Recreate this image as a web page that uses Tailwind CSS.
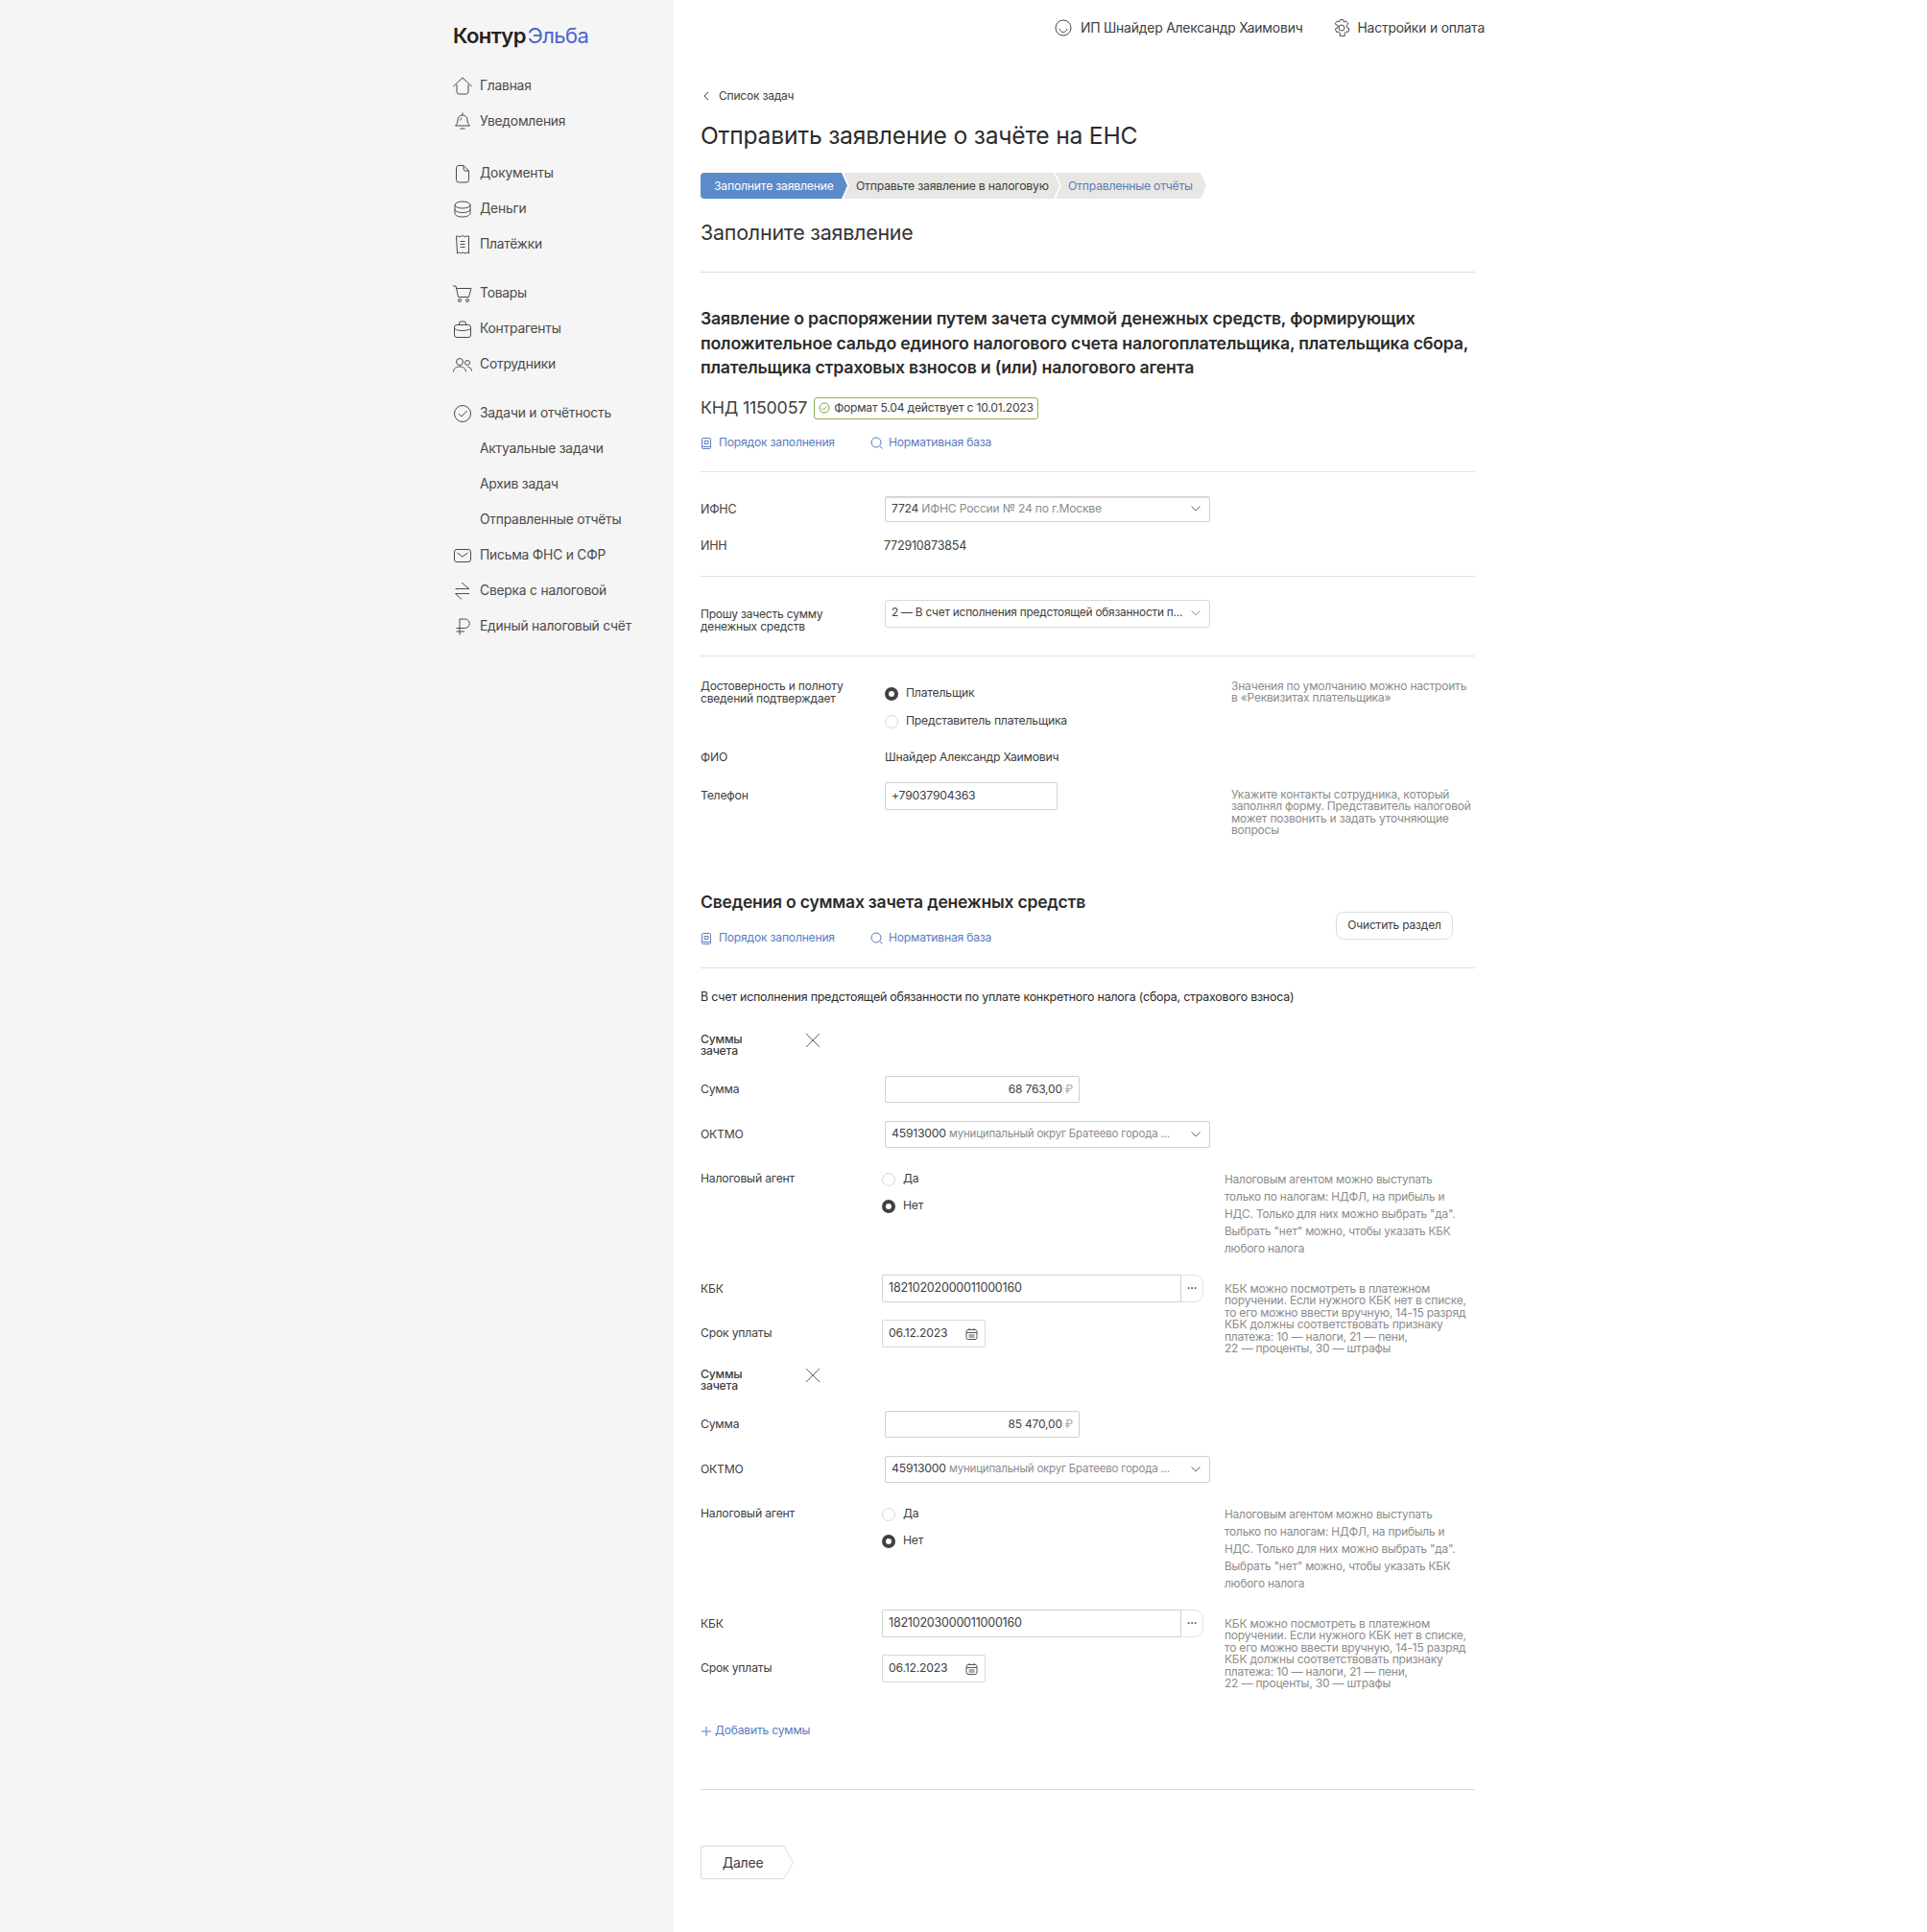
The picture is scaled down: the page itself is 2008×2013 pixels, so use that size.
<!DOCTYPE html>
<html lang="ru">
<head>
    <meta charset="UTF-8">
    <meta name="viewport" content="width=device-width, initial-scale=1.0">
    <title>Контур Эльба</title>
    <script src="https://cdn.jsdelivr.net/npm/@tailwindcss/browser@4"></script>
</head>
<body class="bg-white font-[Inter,sans-serif] text-[#404040] text-[12.2px] tracking-[-0.2px]">
    <div class="flex min-h-[2013px]">
        <!-- sidebar -->
        <aside class="w-[702px] shrink-0 bg-[#f5f5f5] pl-[472px] pt-[22px] text-[13.8px] text-[#4a4a4a]">
            <div class="flex h-[30px] items-center text-[22px] leading-none tracking-[-0.6px]">
                <span class="font-semibold text-[#222]">Контур</span><span class="ml-[2px] text-[#4a63cf]">Эльба</span>
            </div>
            <nav class="mt-[19px] flex flex-col">
                <a class="flex h-[37px] items-center gap-[8px]"><svg class="h-[20px] w-[20px] shrink-0" viewBox="0 0 20 20" fill="none" stroke="#4a4a4a"><path d="M.3 10 10 1l9.700 9"/><path d="M4 8v7.500A2.500 2.500 0 0 0 6.500 18h7a2.500 2.500 0 0 0 2.500-2.500V8"/></svg>Главная</a>
                <a class="flex h-[37px] items-center gap-[8px]"><svg class="h-[20px] w-[20px] shrink-0" viewBox="0 0 20 20" fill="none" stroke="#4a4a4a"><path d="M10 .5V3M10 3c-3 0-5 2.200-5 5 0 3-1 4.500-2.500 6h15c-1.500-1.500-2.500-3-2.500-6 0-2.800-2-5-5-5Z"/><path d="M7.500 17h5M9 5.500 7.500 8.500"/></svg>Уведомления</a>
                <a class="mt-[17px] flex h-[37px] items-center gap-[8px]"><svg class="h-[20px] w-[20px] shrink-0" viewBox="0 0 20 20" fill="none" stroke="#4a4a4a"><path d="M3.500 4A2.500 2.500 0 0 1 6 1.500h5l5.500 5.500v9.500A2.500 2.500 0 0 1 14 19H6a2.500 2.500 0 0 1-2.500-2.500Z"/><path d="M11 1.500V5a2 2 0 0 0 2 2h3.500"/></svg>Документы</a>
                <a class="flex h-[37px] items-center gap-[8px]"><svg class="h-[20px] w-[20px] shrink-0" viewBox="0 0 20 20" fill="none" stroke="#4a4a4a"><ellipse cx="10" cy="5.500" rx="8" ry="3.500"/><path d="M2 5.500V10c0 2 3.600 3.500 8 3.500s8-1.500 8-3.500V5.500"/><path d="M2 10v4.500c0 2 3.600 3.500 8 3.500s8-1.500 8-3.500V10"/></svg>Деньги</a>
                <a class="flex h-[37px] items-center gap-[8px]"><svg class="h-[20px] w-[20px] shrink-0" viewBox="0 0 20 20" fill="none" stroke="#4a4a4a"><path d="M3.500 1h2l1.500 1 1.500-1h3l1.500 1 1.500-1h2v18l-2-1-2 1-2-1-2 1-2-1-2 1Z"/><path d="M7.500 6.500h5M7.500 9.500h5M7.500 12.500h5"/></svg>Платёжки</a>
                <a class="mt-[14px] flex h-[37px] items-center gap-[8px]"><svg class="h-[20px] w-[20px] shrink-0" viewBox="0 0 20 20" fill="none" stroke="#4a4a4a"><path d="M0 2h3l2.500 11.500h11L19 4.500H4"/><circle cx="7" cy="17" r="1.500"/><circle cx="15" cy="17" r="1.500"/></svg>Товары</a>
                <a class="flex h-[37px] items-center gap-[8px]"><svg class="h-[20px] w-[20px] shrink-0" viewBox="0 0 20 20" fill="none" stroke="#4a4a4a"><rect x="1.500" y="5.500" width="17" height="13" rx="2.500"/><path d="M6.500 5.500V4a2 2 0 0 1 2-2h3a2 2 0 0 1 2 2v1.500M1.500 9.500c2.500 1.500 5 2 8.500 2s6-.5 8.500-2"/></svg>Контрагенты</a>
                <a class="flex h-[37px] items-center gap-[8px]"><svg class="h-[20px] w-[20px] shrink-0" viewBox="0 0 20 20" fill="none" stroke="#4a4a4a"><circle cx="7" cy="7" r="3.500"/><path d="M.5 17.500c0-3.500 2.800-5.500 6.500-5.500s6.500 2 6.500 5.500"/><circle cx="15" cy="8" r="2.500"/><path d="M15.500 12.500c2.500 0 4 1.700 4 4"/></svg>Сотрудники</a>
                <a class="mt-[14px] flex h-[37px] items-center gap-[8px]"><svg class="h-[20px] w-[20px] shrink-0" viewBox="0 0 20 20" fill="none" stroke="#4a4a4a"><circle cx="10" cy="10" r="8.500"/><path d="m6 10 3 3 5.500-6"/></svg>Задачи и отчётность</a>
                <a class="flex h-[37px] items-center pl-[28px]">Актуальные задачи</a>
                <a class="flex h-[37px] items-center pl-[28px]">Архив задач</a>
                <a class="flex h-[37px] items-center pl-[28px]">Отправленные отчёты</a>
                <a class="flex h-[37px] items-center gap-[8px]"><svg class="h-[20px] w-[20px] shrink-0" viewBox="0 0 20 20" fill="none" stroke="#4a4a4a"><rect x="1.500" y="3.500" width="17" height="13" rx="2.500"/><path d="m4.500 7 5.500 4 5.500-4"/></svg>Письма ФНС и СФР</a>
                <a class="flex h-[37px] items-center gap-[8px]"><svg class="h-[20px] w-[20px] shrink-0" viewBox="0 0 20 20" fill="none" stroke="#4a4a4a"><path d="M2.500 7.500H17L9 1M17 12.500H2.500L9 18.500"/></svg>Сверка с налоговой</a>
                <a class="flex h-[37px] items-center gap-[8px]"><svg class="h-[20px] w-[20px] shrink-0" viewBox="0 0 20 20" fill="none" stroke="#4a4a4a"><path d="M7 18.500V2h5.500a4.500 4.500 0 0 1 0 9.500H3.500M3.500 15H12"/></svg>Единый налоговый счёт</a>
            </nav>
        </aside>

        <!-- main -->
        <main class="w-[845px] pl-[28px]">
            <header class="flex h-[58px] items-center justify-end text-[13.9px]">
                <svg class="h-[18px] w-[18px]" viewBox="0 0 18 18" fill="none" stroke="#4a4a4a"><circle cx="9" cy="9" r="8"/><path d="M5 10c.5 2.200 2 3.500 4 3.500s3.500-1.300 4-3.500"/></svg>
                <span class="ml-[9px]">ИП Шнайдер Александр Хаимович</span>
                <svg class="ml-[31px] h-[20px] w-[20px]" viewBox="0 0 20 20" fill="none" stroke="#4a4a4a"><path d="M8.300 1.500h3.400l.6 2.400 2.300-1 2.300 3-1.700 1.800.6 2.300 2.200 1-1 3.300-2.500-.2-1.500 1.900.4 2.400H8.100l.4-2.400L7 14.100l-2.500.2-1-3.300 2.200-1 .6-2.300L3.100 5.900l2.300-3 2.300 1Z" stroke-linejoin="round"/><circle cx="10" cy="10" r="3"/></svg>
                <span class="ml-[6px]">Настройки и оплата</span>
            </header>

            <div class="w-[807px]">
                <a class="mt-[32px] flex h-[20px] items-center text-[12px]"><svg class="mr-[10px] ml-[3px] h-[10px] w-[6px]" viewBox="0 0 6 10" fill="none" stroke="#333"><path d="M5 1 1 5l4 4"/></svg>Список задач</a>
                <h1 class="mt-[13px] flex h-[36px] items-center text-[24.6px] text-[#2b2b2b]">Отправить заявление о зачёте на ЕНС</h1>

                <div class="mt-[21px] flex h-[27px] pt-0">
                    <div class="flex w-[153px] items-center whitespace-nowrap rounded-l-[4px] bg-[#5b8bc9] pl-[14px] pt-[1px] text-white [clip-path:polygon(0_0,calc(100%-6px)_0,100%_50%,calc(100%-6px)_100%,0_100%)]">Заполните заявление</div>
                    <div class="-ml-[4px] flex w-[225px] items-center whitespace-nowrap bg-[#e8e7e3] pl-[13px] pt-[1px] [clip-path:polygon(0_0,calc(100%-6px)_0,100%_50%,calc(100%-6px)_100%,0_100%,6px_50%)]">Отправьте заявление в налоговую</div>
                    <div class="-ml-[4px] flex w-[157px] items-center whitespace-nowrap bg-[#e8e7e3] pl-[13px] pt-[1px] text-[#5a7cc0] [clip-path:polygon(0_0,calc(100%-6px)_0,100%_50%,calc(100%-6px)_100%,0_100%,6px_50%)]">Отправленные отчёты</div>
                </div>

                <h2 class="mt-[20px] flex h-[30px] items-center text-[21.4px] text-[#333]">Заполните заявление</h2>
                <hr class="mt-[26px] border-[#dcdcdc]">

                <h3 class="mt-[35px] whitespace-nowrap text-[17.7px] font-semibold leading-[25.5px] text-[#2b2b2b]">Заявление о распоряжении путем зачета суммой денежных средств, формирующих<br>положительное сальдо единого налогового счета налогоплательщика, плательщика сбора,<br>плательщика страховых взносов и (или) налогового агента</h3>

                <div class="mt-[18px] flex h-[23px] items-center">
                    <span class="text-[17.8px] text-[#404040]">КНД 1150057</span>
                    <span class="ml-[7px] flex h-[23px] w-[234px] items-center gap-[4px] whitespace-nowrap rounded-[3px] border border-[#8db24c] pl-[4px] text-[12.1px]"><svg class="h-[12px] w-[12px] shrink-0" viewBox="0 0 12 12" fill="none" stroke="#7fa83f"><circle cx="6" cy="6" r="5"/><path d="m3.500 6 2 2 3-3.500"/></svg>Формат 5.04 действует с 10.01.2023</span>
                </div>

                <div class="mt-[15px] flex h-[20px] items-center text-[12.1px] text-[#5a7cc0]">
                    <svg class="ml-[1px] h-[12px] w-[10px]" viewBox="0 0 10 12" fill="none" stroke="#5a7cc0"><rect x=".5" y=".5" width="9" height="11" rx="1"/><path d="M3 3.500h4v3H3ZM.5 9.500h9"/></svg>
                    <span class="ml-[8px] w-[158px]">Порядок заполнения</span>
                    <svg class="h-[13px] w-[13px]" viewBox="0 0 13 13" fill="none" stroke="#5a7cc0"><circle cx="6" cy="6" r="5"/><path d="m9.500 9.500 3 3"/></svg>
                    <span class="ml-[6px]">Нормативная база</span>
                </div>
                <hr class="mt-[19px] border-[#e2e2e2]">

                <div class="mt-[25px] flex h-[27px] items-center">
                    <span class="w-[192px] shrink-0 pt-[2px] text-[12.5px]">ИФНС</span>
                    <div class="flex h-[27px] w-[339px] items-center justify-between rounded-[2px] border border-[#d0d0d0] pl-[6px] pr-[9px] shadow-[inset_0_1px_0_#ddd] text-[12.1px]"><span class="whitespace-nowrap">7724 <span class="text-[#8c8c8c]">ИФНС России № 24 по г.Москве</span></span><svg class="h-[6px] w-[10px]" viewBox="0 0 10 6" fill="none" stroke="#666"><path d="m.5.500 4.500 4.500L9.500.500"/></svg></div>
                </div>
                <div class="mt-[16px] flex h-[20px] items-center text-[12.5px]">
                    <span class="w-[191px] shrink-0">ИНН</span>
                    <span>772910873854</span>
                </div>
                <hr class="mt-[20px] border-[#e2e2e2]">

                <div class="mt-[24px] flex h-[29px] items-start">
                    <span class="w-[192px] shrink-0 pt-[8px] text-[12px] leading-[13px]">Прошу зачесть сумму<br>денежных средств</span>
                    <div class="flex h-[29px] w-[339px] items-center justify-between rounded-[3px] border border-[#d8d8d8] pl-[6px] pr-[9px] text-[11.8px]"><span class="whitespace-nowrap">2 — В счет исполнения предстоящей обязанности п...</span><svg class="h-[6px] w-[10px] shrink-0" viewBox="0 0 10 6" fill="none" stroke="#999"><path d="m.5.500 4.500 4.500L9.500.500"/></svg></div>
                </div>
                <hr class="mt-[29px] border-[#e2e2e2]">

                <div class="mt-[25px] flex h-[52px] items-start">
                    <span class="-mt-[1px] w-[192px] shrink-0 text-[12px] leading-[13px]">Достоверность и полноту<br>сведений подтверждает</span>
                    <div class="w-[361px] shrink-0 pt-[4px]">
                        <label class="flex h-[20px] items-center gap-[8px]"><span class="h-[14px] w-[14px] rounded-full border-[4px] border-[#404040] bg-white"></span>Плательщик</label>
                        <label class="mt-[9px] flex h-[20px] items-center gap-[8px]"><span class="h-[14px] w-[14px] rounded-full border border-[#d8d8d8]"></span>Представитель плательщика</label>
                    </div>
                    <p class="whitespace-nowrap text-[12px] leading-[12.5px] text-[#8c8c8c]">Значения по умолчанию можно настроить<br>в «Реквизитах плательщика»</p>
                </div>
                <div class="mt-[19px] flex h-[20px] items-center">
                    <span class="w-[192px] shrink-0">ФИО</span>
                    <span>Шнайдер Александр Хаимович</span>
                </div>
                <div class="mt-[15px] flex h-[58px] items-start">
                    <span class="flex h-[29px] w-[192px] shrink-0 items-center">Телефон</span>
                    <div class="w-[361px] shrink-0"><div class="flex h-[29px] w-[180px] items-center rounded-[2px] border border-[#d0d0d0] pl-[6px]">+79037904363</div></div>
                    <p class="whitespace-nowrap pt-[7px] text-[12px] leading-[12.5px] text-[#8c8c8c]">Укажите контакты сотрудника, который<br>заполнял форму. Представитель налоговой<br>может позвонить и задать уточняющие<br>вопросы</p>
                </div>

                <div class="mt-[58px] flex justify-between">
                    <div>
                        <h3 class="flex h-[20px] items-center text-[17.5px] font-semibold text-[#2b2b2b]">Сведения о суммах зачета денежных средств</h3>
                        <div class="mt-[17px] flex h-[20px] items-center text-[12.1px] text-[#5a7cc0]">
                            <svg class="ml-[1px] h-[12px] w-[10px]" viewBox="0 0 10 12" fill="none" stroke="#5a7cc0"><rect x=".5" y=".5" width="9" height="11" rx="1"/><path d="M3 3.500h4v3H3ZM.5 9.500h9"/></svg>
                            <span class="ml-[8px] w-[158px]">Порядок заполнения</span>
                            <svg class="h-[13px] w-[13px]" viewBox="0 0 13 13" fill="none" stroke="#5a7cc0"><circle cx="6" cy="6" r="5"/><path d="m9.500 9.500 3 3"/></svg>
                            <span class="ml-[6px]">Нормативная база</span>
                        </div>
                    </div>
                    <button class="mr-[23px] mt-[19px] h-[29px] w-[122px] rounded-[8px] border border-[#dcdcdc] text-[12px]">Очистить раздел</button>
                </div>
                <hr class="mt-[20px] border-[#e2e2e2]">
                <p class="mt-[21px] flex h-[20px] items-center text-[12.4px] text-[#2b2b2b]">В счет исполнения предстоящей обязанности по уплате конкретного налога (сбора, страхового взноса)</p>

                <!-- первая сумма -->
                <section class="mt-[26px]">
                    <div class="flex h-[27px] items-start">
                        <span class="w-[109px] shrink-0 pt-[1px] font-medium leading-[12.5px]">Суммы<br>зачета</span>
                        <svg class="h-[16px] w-[16px]" viewBox="0 0 16 16" fill="none" stroke="#666"><path d="m1 1 14 14M15 1 1 15"/></svg>
                    </div>
                    <div class="mt-[18px] flex h-[28px] items-center">
                        <span class="w-[192px] shrink-0 pt-[2px]">Сумма</span>
                        <div class="flex h-[28px] w-[203px] items-center justify-end rounded-[2px] border border-[#d0d0d0] pr-[6px] text-[12px]">68 763,00 <span class="ml-[3px] text-[#aaa]">₽</span></div>
                    </div>
                    <div class="mt-[19px] flex h-[28px] items-center">
                        <span class="w-[192px] shrink-0 pt-[2px]">ОКТМО</span>
                        <div class="flex h-[28px] w-[339px] items-center justify-between rounded-[2px] border border-[#d0d0d0] pl-[6px] pr-[9px]"><span class="whitespace-nowrap">45913000 <span class="text-[11.5px] text-[#8c8c8c]">муниципальный округ Братеево города ...</span></span><svg class="h-[6px] w-[10px]" viewBox="0 0 10 6" fill="none" stroke="#666"><path d="m.5.500 4.500 4.500L9.500.500"/></svg></div>
                    </div>
                    <div class="mt-[22px] flex h-[92px] items-start">
                        <span class="flex h-[20px] w-[189px] shrink-0 items-center pt-[2px]">Налоговый агент</span>
                        <div class="w-[357px] shrink-0">
                            <label class="mt-[1px] flex h-[20px] items-center gap-[8px]"><span class="h-[14px] w-[14px] rounded-full border border-[#d8d8d8]"></span>Да</label>
                            <label class="mt-[8px] flex h-[20px] items-center gap-[8px]"><span class="h-[14px] w-[14px] rounded-full border-[4px] border-[#404040] bg-white"></span>Нет</label>
                        </div>
                        <p class="whitespace-nowrap pt-[2px] text-[11.85px] leading-[18px] text-[#8c8c8c]">Налоговым агентом можно выступать<br>только по налогам: НДФЛ, на прибыль и<br>НДС. Только для них можно выбрать "да".<br>Выбрать "нет" можно, чтобы указать КБК<br>любого налога</p>
                    </div>
                    <div class="mt-[18px] flex">
                        <div class="w-[546px] shrink-0">
                            <div class="flex h-[29px] items-center">
                                <span class="w-[189px] shrink-0 pt-[2px]">КБК</span>
                                <div class="flex h-[29px] w-[312px] items-center rounded-l-[2px] border border-[#d0d0d0] pl-[6px] text-[12.5px]">18210202000011000160</div>
                                <div class="flex h-[29px] w-[23px] items-center justify-center rounded-r-[9px] border border-l-0 border-[#e2e2e2] text-[11px] font-bold leading-none">···</div>
                            </div>
                            <div class="mt-[18px] flex h-[29px] items-center">
                                <span class="w-[189px] shrink-0">Срок уплаты</span>
                                <div class="flex h-[29px] w-[108px] items-center justify-between rounded-[2px] border border-[#d8d8d8] pl-[6px] pr-[7px]">06.12.2023<svg class="h-[13px] w-[13px]" viewBox="0 0 13 13" fill="none" stroke="#555"><rect x="1" y="2.500" width="11" height="10" rx="2"/><path d="M1 5.500h11M4 1v2M9 1v2M3.500 8h6M3.500 10h6"/></svg></div>
                            </div>
                        </div>
                        <p class="h-[85px] whitespace-nowrap pt-[9px] text-[12px] leading-[12.6px] text-[#8c8c8c]">КБК можно посмотреть в платежном<br>поручении. Если нужного КБК нет в списке,<br>то его можно ввести вручную, 14-15 разряд<br>КБК должны соответствовать признаку<br>платежа: 10 — налоги, 21 — пени,<br>22 — проценты, 30 — штрафы</p>
                    </div>
                </section>

                <!-- вторая сумма -->
                <section class="mt-[12px]">
                    <div class="flex h-[27px] items-start">
                        <span class="w-[109px] shrink-0 pt-[1px] font-medium leading-[12.5px]">Суммы<br>зачета</span>
                        <svg class="h-[16px] w-[16px]" viewBox="0 0 16 16" fill="none" stroke="#666"><path d="m1 1 14 14M15 1 1 15"/></svg>
                    </div>
                    <div class="mt-[18px] flex h-[28px] items-center">
                        <span class="w-[192px] shrink-0 pt-[2px]">Сумма</span>
                        <div class="flex h-[28px] w-[203px] items-center justify-end rounded-[2px] border border-[#d0d0d0] pr-[6px] text-[12px]">85 470,00 <span class="ml-[3px] text-[#aaa]">₽</span></div>
                    </div>
                    <div class="mt-[19px] flex h-[28px] items-center">
                        <span class="w-[192px] shrink-0 pt-[2px]">ОКТМО</span>
                        <div class="flex h-[28px] w-[339px] items-center justify-between rounded-[2px] border border-[#d0d0d0] pl-[6px] pr-[9px]"><span class="whitespace-nowrap">45913000 <span class="text-[11.5px] text-[#8c8c8c]">муниципальный округ Братеево города ...</span></span><svg class="h-[6px] w-[10px]" viewBox="0 0 10 6" fill="none" stroke="#666"><path d="m.5.500 4.500 4.500L9.500.500"/></svg></div>
                    </div>
                    <div class="mt-[22px] flex h-[92px] items-start">
                        <span class="flex h-[20px] w-[189px] shrink-0 items-center pt-[2px]">Налоговый агент</span>
                        <div class="w-[357px] shrink-0">
                            <label class="mt-[1px] flex h-[20px] items-center gap-[8px]"><span class="h-[14px] w-[14px] rounded-full border border-[#d8d8d8]"></span>Да</label>
                            <label class="mt-[8px] flex h-[20px] items-center gap-[8px]"><span class="h-[14px] w-[14px] rounded-full border-[4px] border-[#404040] bg-white"></span>Нет</label>
                        </div>
                        <p class="whitespace-nowrap pt-[2px] text-[11.85px] leading-[18px] text-[#8c8c8c]">Налоговым агентом можно выступать<br>только по налогам: НДФЛ, на прибыль и<br>НДС. Только для них можно выбрать "да".<br>Выбрать "нет" можно, чтобы указать КБК<br>любого налога</p>
                    </div>
                    <div class="mt-[18px] flex">
                        <div class="w-[546px] shrink-0">
                            <div class="flex h-[29px] items-center">
                                <span class="w-[189px] shrink-0 pt-[2px]">КБК</span>
                                <div class="flex h-[29px] w-[312px] items-center rounded-l-[2px] border border-[#d0d0d0] pl-[6px] text-[12.5px]">18210203000011000160</div>
                                <div class="flex h-[29px] w-[23px] items-center justify-center rounded-r-[9px] border border-l-0 border-[#e2e2e2] text-[11px] font-bold leading-none">···</div>
                            </div>
                            <div class="mt-[18px] flex h-[29px] items-center">
                                <span class="w-[189px] shrink-0">Срок уплаты</span>
                                <div class="flex h-[29px] w-[108px] items-center justify-between rounded-[2px] border border-[#d8d8d8] pl-[6px] pr-[7px]">06.12.2023<svg class="h-[13px] w-[13px]" viewBox="0 0 13 13" fill="none" stroke="#555"><rect x="1" y="2.500" width="11" height="10" rx="2"/><path d="M1 5.500h11M4 1v2M9 1v2M3.500 8h6M3.500 10h6"/></svg></div>
                            </div>
                        </div>
                        <p class="h-[85px] whitespace-nowrap pt-[9px] text-[12px] leading-[12.6px] text-[#8c8c8c]">КБК можно посмотреть в платежном<br>поручении. Если нужного КБК нет в списке,<br>то его можно ввести вручную, 14-15 разряд<br>КБК должны соответствовать признаку<br>платежа: 10 — налоги, 21 — пени,<br>22 — проценты, 30 — штрафы</p>
                    </div>
                </section>

                <a class="mt-[32px] flex h-[20px] items-center gap-[4px] text-[12.1px] text-[#5a7cc0]"><svg class="ml-[1px] h-[10px] w-[10px]" viewBox="0 0 10 10" fill="none" stroke="#5a7cc0"><path d="M5 0v10M0 5h10"/></svg>Добавить суммы</a>
                <hr class="mt-[50px] border-[#dcdcdc]">

                <div class="mt-[58px] flex h-[35px] w-[97px] text-[14px]">
                    <div class="flex h-[35px] w-[87px] items-center justify-center rounded-l-[3px] border-y border-l border-[#dcdcdc]">Далее</div>
                    <svg class="h-[35px] w-[10px]" viewBox="0 0 10 35" fill="none" stroke="#dcdcdc"><path d="M0 .5 9.500 17.500 0 34.500"/></svg>
                </div>
            </div>
        </main>
    </div>
</body>
</html>
